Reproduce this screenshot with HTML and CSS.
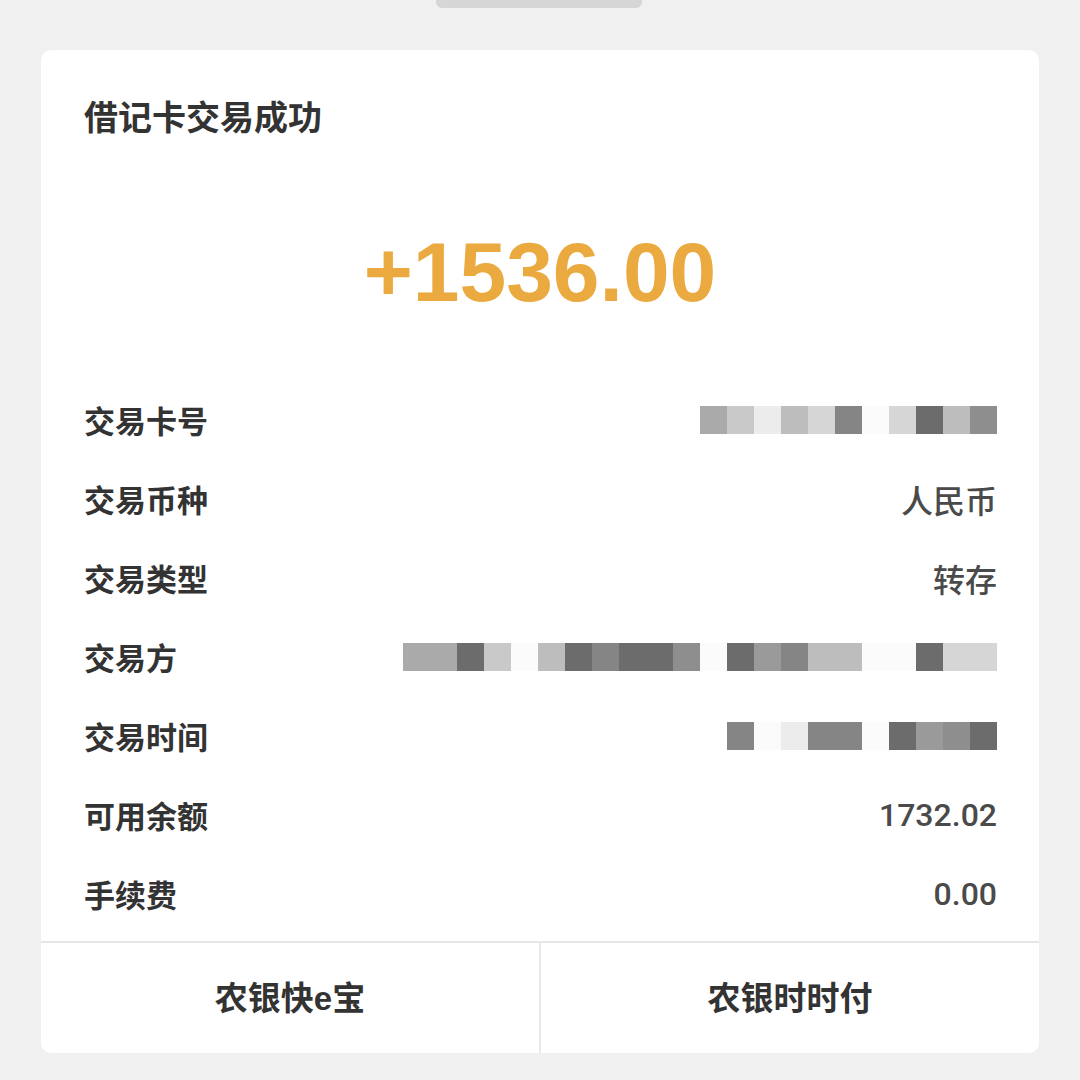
FILE: index.html
```html
<!DOCTYPE html>
<html>
<head>
  <meta charset="utf-8">
  <title>借记卡交易成功</title>
  <link rel="stylesheet" href="styles.css">
</head>
<body>
  <div class="handle"></div>

  <div class="card">
    <h1 class="title">借记卡交易成功</h1>

    <div class="amount">+1536.00</div>

    <div class="rows">
      <div class="row">
        <span class="label">交易卡号</span>
        <span class="mosaic">
          <i class="g3"></i><i class="g5"></i><i class="g8"></i><i class="g4"></i><i class="g6"></i><i class="g2"></i><i class="g9"></i><i class="g6"></i><i class="g1"></i><i class="g4"></i><i class="g2b"></i>
        </span>
      </div>
      <div class="row">
        <span class="label">交易币种</span>
        <span class="value">人民币</span>
      </div>
      <div class="row">
        <span class="label">交易类型</span>
        <span class="value">转存</span>
      </div>
      <div class="row">
        <span class="label">交易方</span>
        <span class="mosaic">
          <i class="g3"></i><i class="g3"></i><i class="g1"></i><i class="g5"></i><i class="g9"></i><i class="g4"></i><i class="g1"></i><i class="g2"></i><i class="g1"></i><i class="g1"></i><i class="g2b"></i><i class="g9"></i><i class="g1"></i><i class="g7"></i><i class="g2"></i><i class="g4"></i><i class="g4"></i><i class="g9"></i><i class="g9"></i><i class="g1"></i><i class="g6"></i><i class="g6"></i>
        </span>
      </div>
      <div class="row">
        <span class="label">交易时间</span>
        <span class="mosaic">
          <i class="g2"></i><i class="g9"></i><i class="g8"></i><i class="g2"></i><i class="g2"></i><i class="g9"></i><i class="g1"></i><i class="g7"></i><i class="g2b"></i><i class="g1"></i>
        </span>
      </div>
      <div class="row">
        <span class="label">可用余额</span>
        <span class="value">1732.02</span>
      </div>
      <div class="row">
        <span class="label">手续费</span>
        <span class="value">0.00</span>
      </div>
    </div>

    <div class="actions">
      <div class="action">农银快e宝</div>
      <div class="action">农银时时付</div>
    </div>
  </div>
</body>
</html>
```

FILE: styles.css
```css
body {
  margin: 0;
  background-color: #f0f0f0;
  font-family: "Liberation Sans", "Noto Sans CJK SC", sans-serif;
  color: #333;
}
.handle {
  width: 206px;
  height: 8px;
  margin-left: 436px;
  background-color: #d6d6d6;
  border-radius: 0 0 6px 6px;
}
.card {
  margin: 42px 41px 0;
  background-color: #fff;
  border-radius: 10px;
  padding-top: 48px;
  overflow: hidden;
}
.title {
  margin: 0 0 0 43px;
  font-size: 34px;
  line-height: 40px;
  font-weight: 700;
  color: #333;
}
.amount {
  margin-top: 84px;
  text-align: center;
  font-size: 84px;
  line-height: 100px;
  font-weight: 700;
  color: #eaaa40;
}
.rows {
  margin-top: 58px;
  padding: 0 42px 0 43px;
}
.row {
  display: flex;
  justify-content: space-between;
  align-items: center;
  height: 79px;
}
.label {
  font-size: 31px;
  font-weight: 700;
  color: #333;
}
.value {
  font-family: Roboto, "Noto Sans CJK SC", sans-serif;
  font-size: 32px;
  font-weight: 500;
  color: #4a4a4a;
}
.mosaic {
  display: flex;
  height: 28px;
}
.mosaic i {
  display: block;
  width: 27px;
  height: 28px;
}
.g1 { background-color: #6c6c6c; }
.g2 { background-color: #858585; }
.g2b { background-color: #8e8e8e; }
.g3 { background-color: #aaaaaa; }
.g4 { background-color: #bdbdbd; }
.g5 { background-color: #c9c9c9; }
.g6 { background-color: #d6d6d6; }
.g7 { background-color: #9a9a9a; }
.g8 { background-color: #ececec; }
.g9 { background-color: #fbfbfb; }
.actions {
  display: flex;
  margin-top: 8px;
  border-top: 2px solid #e6e6e6;
}
.action {
  flex: 1;
  height: 110px;
  padding-bottom: 4px;
  box-sizing: border-box;
  display: flex;
  align-items: center;
  justify-content: center;
  font-size: 33px;
  font-weight: 700;
  color: #333;
}
.action + .action {
  border-left: 2px solid #e8e8e8;
}
```
